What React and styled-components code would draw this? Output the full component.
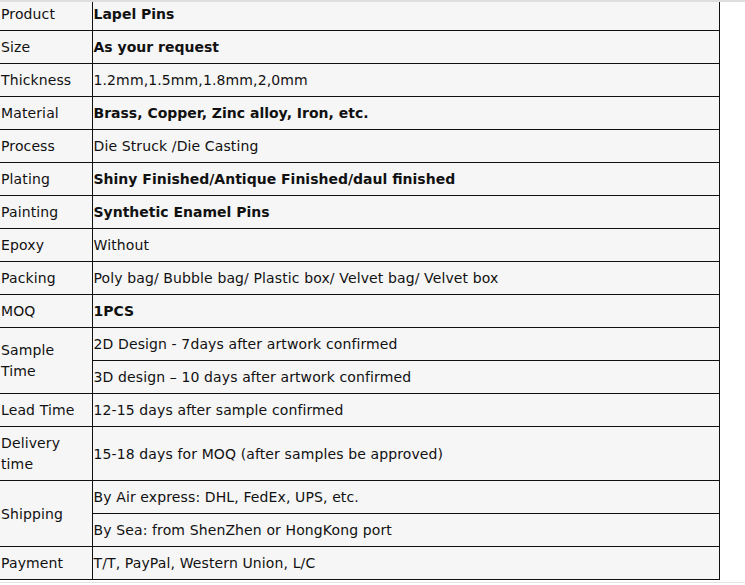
import React from "react";
import styled, { createGlobalStyle } from "styled-components";

const Global = createGlobalStyle`
  html, body { margin: 0; padding: 0; background: #ffffff; }
  body { font-family: "DejaVu Sans", Verdana, sans-serif; }
`;

const Frame = styled.div`
  width: 745px;
  height: 585px;
  overflow: hidden;
  border-top: 2px solid #dedede;
  box-sizing: border-box;
`;

const SpecTable = styled.table`
  margin-top: -5px;
  width: 720px;
  border-collapse: collapse;
  table-layout: fixed;
  background: #f6f6f6;
  color: #111111;
  font-family: "DejaVu Sans", Verdana, sans-serif;
  font-size: 14px;
  line-height: 21px;
`;

const Cell = styled.td`
  border: 1px solid #111111;
  border-left: ${(p) => (p.$first ? "none" : "1px solid #111111")};
  padding: 6px 0 5px 1px;
  vertical-align: middle;
  font-weight: ${(p) => (p.$bold ? 700 : 400)};
  letter-spacing: ${(p) => (p.$bold ? "0" : "0.12px")};
  white-space: ${(p) => (p.$wrap ? "normal" : "nowrap")};
  overflow: hidden;
`;

const Rule = styled.div`
  margin-top: 2px;
  width: 745px;
  height: 1px;
  background: #e4e4e4;
`;

const rows = [
  { label: "Product", values: ["Lapel Pins"], bold: true },
  { label: "Size", values: ["As your request"], bold: true },
  { label: "Thickness", values: ["1.2mm,1.5mm,1.8mm,2,0mm"] },
  { label: "Material", values: ["Brass, Copper, Zinc alloy, Iron, etc."], bold: true },
  { label: "Process", values: ["Die Struck /Die Casting"] },
  { label: "Plating", values: ["Shiny Finished/Antique Finished/daul finished"], bold: true },
  { label: "Painting", values: ["Synthetic Enamel Pins"], bold: true },
  { label: "Epoxy", values: ["Without"] },
  { label: "Packing", values: ["Poly bag/ Bubble bag/ Plastic box/ Velvet bag/ Velvet box"] },
  { label: "MOQ", values: ["1PCS"], bold: true },
  {
    label: "Sample Time",
    wrap: true,
    values: ["2D Design - 7days after artwork confirmed", "3D design \u2013 10 days after artwork confirmed"],
  },
  { label: "Lead Time", values: ["12-15 days after sample confirmed"] },
  { label: "Delivery time", wrap: true, values: ["15-18 days for MOQ (after samples be approved)"] },
  {
    label: "Shipping",
    values: ["By Air express: DHL, FedEx, UPS, etc.", "By Sea: from ShenZhen or HongKong port"],
  },
  { label: "Payment", values: ["T/T, PayPal, Western Union, L/C"] },
];

export default function App() {
  return (
    <>
      <Global />
      <Frame>
        <SpecTable>
          <colgroup>
            <col style={{ width: "92px" }} />
            <col />
          </colgroup>
          <tbody>
            {rows.map((r) =>
              r.values.map((v, i) => (
                <tr key={r.label + i}>
                  {i === 0 && (
                    <Cell $first $wrap={r.wrap} rowSpan={r.values.length}>
                      {r.label}
                    </Cell>
                  )}
                  <Cell $bold={r.bold}>{v}</Cell>
                </tr>
              ))
            )}
          </tbody>
        </SpecTable>
        <Rule />
      </Frame>
    </>
  );
}
